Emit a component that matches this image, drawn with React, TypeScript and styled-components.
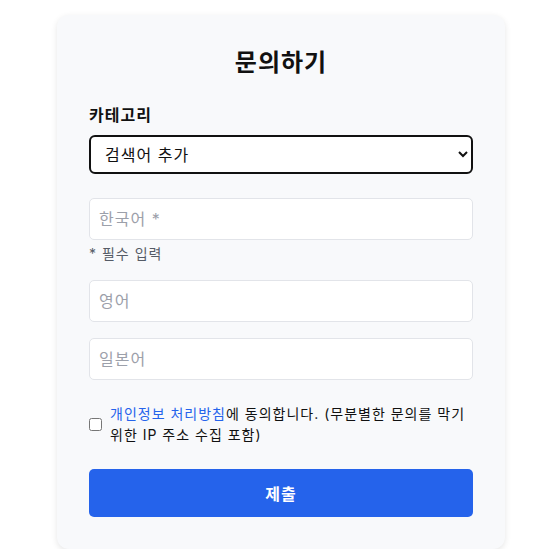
import { createGlobalStyle, styled } from 'styled-components';

const GlobalStyle = createGlobalStyle`
  * {
    box-sizing: border-box;
  }
  body {
    margin: 0;
    background: #ffffff;
    font-family: Inter, 'Noto Sans CJK KR', sans-serif;
    letter-spacing: 1px;
    color: #111111;
  }
`;

const Page = styled.div`
  padding: 15px 0 0 57px;
`;

const Card = styled.form`
  width: 448px;
  padding: 32px;
  background: #f8f9fb;
  border-radius: 12px;
  box-shadow: 0 2px 6px rgba(0, 0, 0, 0.1);
  display: flex;
  flex-direction: column;
`;

const Title = styled.h2`
  margin: 0 0 24px;
  font-size: 24px;
  line-height: 32px;
  font-weight: 700;
  text-align: center;
`;

const Label = styled.label`
  display: block;
  font-size: 16px;
  line-height: 24px;
  font-weight: 700;
  margin-bottom: 8px;
`;

const Group = styled.div<{ $gap: number }>`
  margin-bottom: ${(p) => p.$gap}px;
`;

const Select = styled.select`
  display: block;
  width: 100%;
  height: 39px;
  padding: 0 8px 0 10px;
  font-family: inherit;
  letter-spacing: inherit;
  font-size: 16px;
  color: #111111;
  background: #ffffff;
  border: 2px solid #111111;
  border-radius: 6px;
  outline: none;
`;

const Input = styled.input`
  display: block;
  width: 100%;
  height: 42px;
  padding: 10px 9px;
  font-family: inherit;
  letter-spacing: inherit;
  font-size: 16px;
  background: #ffffff;
  border: 1px solid #e2e4e9;
  border-radius: 5px;
  outline: none;

  &::placeholder {
    color: #9ca0aa;
  }
`;

const Hint = styled.div`
  margin-top: 4px;
  font-size: 14px;
  line-height: 20px;
  color: #555b66;
`;

const AgreeRow = styled.label`
  display: flex;
  align-items: flex-start;
  gap: 8px;
  font-size: 14px;
  line-height: 21px;
  margin-bottom: 24px;
`;

const Checkbox = styled.input`
  flex: none;
  width: 13px;
  height: 13px;
  margin: 15px 0 0;
`;

const Link = styled.a`
  color: #2563eb;
  text-decoration: none;
`;

const SubmitButton = styled.button`
  height: 48px;
  border: none;
  border-radius: 5px;
  background: #2563eb;
  color: #ffffff;
  font-family: inherit;
  letter-spacing: inherit;
  font-size: 16px;
  font-weight: 700;
`;

export default function App() {
  return (
    <>
      <GlobalStyle />
      <Page>
        <Card onSubmit={(e) => e.preventDefault()}>
          <Title>문의하기</Title>
          <Group $gap={24}>
            <Label>카테고리</Label>
            <Select defaultValue="add">
              <option value="add">검색어 추가</option>
            </Select>
          </Group>
          <Group $gap={16}>
            <Input placeholder="한국어 *" />
            <Hint>* 필수 입력</Hint>
          </Group>
          <Group $gap={16}>
            <Input placeholder="영어" />
          </Group>
          <Group $gap={23}>
            <Input placeholder="일본어" />
          </Group>
          <AgreeRow>
            <Checkbox type="checkbox" />
            <span>
              <Link href="#">개인정보 처리방침</Link>에 동의합니다. (무분별한 문의를 막기 위한 IP 주소 수집 포함)
            </span>
          </AgreeRow>
          <SubmitButton type="submit">제출</SubmitButton>
        </Card>
      </Page>
    </>
  );
}
